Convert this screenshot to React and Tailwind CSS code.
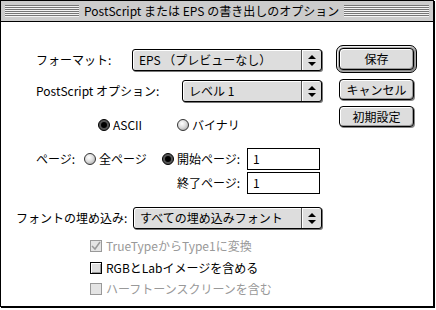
const font = "font-['Noto_Sans_CJK_JP','Noto_Sans',sans-serif]"

function Stripes({ className }) {
  return (
    <div
      className={`h-[12px] bg-[repeating-linear-gradient(to_bottom,#777_0px,#777_1px,#f4f4f4_1px,#f4f4f4_2px)] ${className}`}
    />
  )
}

function Arrows() {
  return (
    <svg width="8" height="11" viewBox="0 0 8 11">
      <path d="M4 0 L8 4 L0 4 Z" fill="#000" />
      <path d="M0 7 L8 7 L4 11 Z" fill="#000" />
    </svg>
  )
}

function Popup({ w, text }) {
  return (
    <div
      className={`${w} h-[22px] flex rounded-[3px] border border-black bg-[#dddddd] shadow-[1px_1px_0_#777,inset_1px_1px_0_#fff]`}
    >
      <div className="flex-1 flex items-center pl-[6px] text-[12px] leading-none text-black">{text}</div>
      <div className="w-[20px] flex items-center justify-center border-l border-[#555] shadow-[inset_1px_0_0_#fff]">
        <Arrows />
      </div>
    </div>
  )
}

function Button({ children, className = '' }) {
  return (
    <div
      className={`h-[21px] flex items-center justify-center rounded-[4px] border border-black bg-[#dddddd] shadow-[inset_1px_1px_0_#fff,inset_-1px_-1px_0_#999,1px_1px_0_#888] text-[12px] leading-none ${className}`}
    >
      {children}
    </div>
  )
}

function Radio({ on }) {
  if (on)
    return (
      <div className="w-[12px] h-[12px] rounded-full border border-black bg-[#555] flex items-center justify-center">
        <div className="w-[6px] h-[6px] rounded-full bg-black" />
      </div>
    )
  return (
    <div className="w-[12px] h-[12px] rounded-full border border-[#333] bg-[radial-gradient(circle_at_40%_35%,#ffffff_0%,#dddddd_45%,#999999_100%)]" />
  )
}

function Check({ checked, disabled }) {
  return (
    <div
      className={`w-[12px] h-[12px] flex items-center justify-center border ${
        disabled ? 'border-[#999] bg-[#e4e4e4]' : 'border-black bg-[#dddddd] shadow-[inset_1px_1px_0_#fff,inset_-1px_-1px_0_#999]'
      }`}
    >
      {checked && (
        <svg width="10" height="10" viewBox="0 0 10 10">
          <path d="M1 5 L4 8 L9 1" stroke={disabled ? '#999' : '#000'} strokeWidth="1.5" fill="none" />
        </svg>
      )}
    </div>
  )
}

function Field({ value }) {
  return (
    <div className="w-[73px] h-[22px] border border-black bg-white flex items-center pl-[5px] text-[12px] leading-none">
      {value}
    </div>
  )
}

export default function App() {
  return (
    <div className={`w-[436px] h-[310px] bg-white ${font} text-black`}>
      <div className="w-[434px] h-[307px] border border-black shadow-[1px_1px_0_#000] flex flex-col bg-white">
        {/* title bar */}
        <div className="h-[21px] bg-[#cccccc] border-b border-black flex items-center px-[4px] gap-[4px]">
          <Stripes className="w-[74px]" />
          <div className="text-[12px] leading-none whitespace-nowrap px-[1px]">
            PostScript または EPS の書き出しのオプション
          </div>
          <Stripes className="flex-1" />
        </div>

        <div className="flex flex-1">
          {/* form */}
          <div className="w-[335px] flex flex-col text-[12px] leading-none">
            <div className="mt-[27px] flex items-center pl-[35px]">
              <div className="w-[96px]">フォーマット:</div>
              <Popup w="w-[190px]" text="EPS （プレビューなし）" />
            </div>
            <div className="mt-[9px] flex items-center pl-[35px]">
              <div className="w-[146px]">PostScript オプション:</div>
              <Popup w="w-[140px]" text="レベル 1" />
            </div>
            <div className="mt-[15px] h-[16px] flex items-center pl-[97px]">
              <div className="w-[79px] flex items-center gap-[3px]">
                <Radio on />
                <span>ASCII</span>
              </div>
              <div className="flex items-center gap-[3px]">
                <Radio />
                <span>バイナリ</span>
              </div>
            </div>
            <div className="mt-[15px] flex items-center pl-[35px]">
              <div className="w-[48px]">ページ:</div>
              <div className="w-[78px] flex items-center gap-[3px]">
                <Radio />
                <span>全ページ</span>
              </div>
              <div className="w-[85px] flex items-center gap-[3px]">
                <Radio on />
                <span>開始ページ:</span>
              </div>
              <Field value="1" />
            </div>
            <div className="mt-[2px] flex items-center pl-[176px]">
              <div className="w-[70px]">終了ページ:</div>
              <Field value="1" />
            </div>
            <div className="mt-[13px] flex items-center pl-[15px]">
              <div className="w-[117px]">フォントの埋め込み:</div>
              <Popup w="w-[189px]" text="すべての埋め込みフォント" />
            </div>
            <div className="mt-[9px] h-[16px] flex items-center gap-[4px] pl-[89px] text-[#999]">
              <Check checked disabled />
              <span>TrueTypeからType1に変換</span>
            </div>
            <div className="mt-[6px] h-[16px] flex items-center gap-[4px] pl-[89px]">
              <Check />
              <span>RGBとLabイメージを含める</span>
            </div>
            <div className="mt-[5px] h-[16px] flex items-center gap-[4px] pl-[89px] text-[#999]">
              <Check disabled />
              <span>ハーフトーンスクリーンを含む</span>
            </div>
          </div>

          {/* buttons */}
          <div className="flex flex-col items-start">
            <div className="mt-[23px] w-[81px] h-[28px] rounded-[7px] border border-black bg-[#aaaaaa] p-[2px] shadow-[inset_1px_1px_0_#eee]">
              <Button className="h-full w-full">保存</Button>
            </div>
            <Button className="mt-[6px] ml-[3px] w-[75px]">キャンセル</Button>
            <Button className="mt-[6px] ml-[3px] w-[75px]">初期設定</Button>
          </div>
        </div>
      </div>
    </div>
  )
}
